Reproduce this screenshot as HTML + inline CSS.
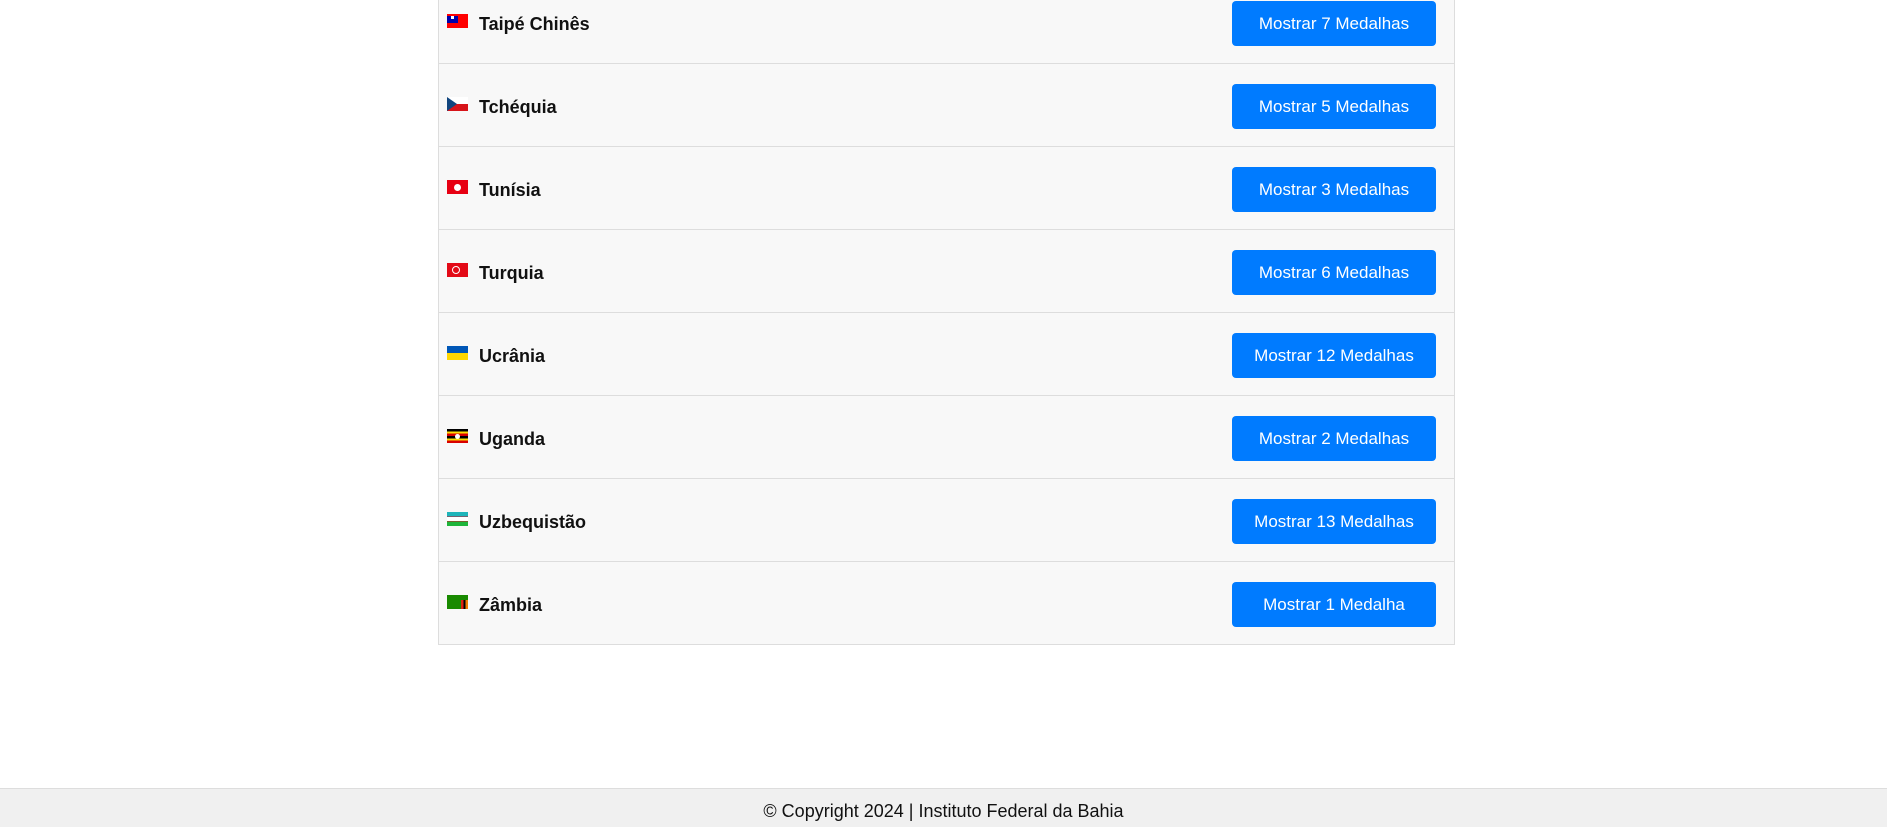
<!DOCTYPE html>
<html><head><meta charset="utf-8"><style>
body{margin:0;width:1887px;height:827px;background:#fff;font-family:"Liberation Sans",sans-serif;position:relative;overflow:hidden}
.list{position:absolute;left:438px;top:-19px;width:1017px;border:1px solid #ddd;border-top:none;box-sizing:border-box}
.row{height:83px;border-bottom:1px solid #ddd;box-sizing:border-box;background:#f8f8f8;position:relative}
.row:last-child{border-bottom:none;height:82px}
.flag{position:absolute;left:8px;top:33px;width:21px;height:14px;overflow:hidden}
.name{position:absolute;left:40px;top:33px;font-weight:bold;font-size:18px;color:#111}
.btn{position:absolute;right:18px;top:20px;width:204px;height:45px;background:#007bff;color:#fff;border-radius:4px;font-size:17px;line-height:45px;text-align:center}
.footer{position:absolute;left:0;top:788px;width:1887px;height:39px;background:#f0f0f0;border-top:1px solid #ddd;box-sizing:border-box;text-align:center;font-size:18px;line-height:44px;color:#111}
</style></head><body>
<div class="list">
<div class="row"><div class="flag" style="background:#f00"><div style="width:11px;height:7px;background:#00a"><div style="width:3px;height:3px;background:#fff;margin:2px 4px"></div></div></div><div class="name">Taipé Chinês</div><div class="btn">Mostrar 7 Medalhas</div></div>
<div class="row"><div class="flag" style="background:linear-gradient(#fff 50%,#d7141a 50%)"><svg width="21" height="14" style="position:absolute;left:0;top:0"><polygon points="0,0 10,7 0,14" fill="#11457e"/></svg></div><div class="name">Tchéquia</div><div class="btn">Mostrar 5 Medalhas</div></div>
<div class="row"><div class="flag" style="background:#e70013"><div style="width:7px;height:7px;border-radius:50%;background:#fff;margin:3.5px 7px"></div></div><div class="name">Tunísia</div><div class="btn">Mostrar 3 Medalhas</div></div>
<div class="row"><div class="flag" style="background:#e30a17"><div style="width:6px;height:6px;border-radius:50%;border:1px solid #fff;margin:3px 5px"></div></div><div class="name">Turquia</div><div class="btn">Mostrar 6 Medalhas</div></div>
<div class="row"><div class="flag" style="background:linear-gradient(#0057b7 50%,#ffd700 50%)"></div><div class="name">Ucrânia</div><div class="btn">Mostrar 12 Medalhas</div></div>
<div class="row"><div class="flag" style="background:linear-gradient(#000 0 17%,#fcdc04 17% 33%,#d90000 33% 50%,#000 50% 67%,#fcdc04 67% 83%,#d90000 83%)"><div style="width:5px;height:5px;border-radius:50%;background:#fff;margin:4.5px 8px"></div></div><div class="name">Uganda</div><div class="btn">Mostrar 2 Medalhas</div></div>
<div class="row"><div class="flag" style="background:linear-gradient(#1eb5ba 0 32%,#ce1126 32% 35%,#fff 35% 65%,#ce1126 65% 68%,#1eb53a 68%)"></div><div class="name">Uzbequistão</div><div class="btn">Mostrar 13 Medalhas</div></div>
<div class="row"><div class="flag" style="background:#198a00"><div style="position:absolute;right:0;bottom:0;width:7px;height:9px;background:linear-gradient(90deg,#de2010 33%,#000 33% 66%,#ef7d00 66%)"></div></div><div class="name">Zâmbia</div><div class="btn">Mostrar 1 Medalha</div></div>
</div>
<div class="footer">© Copyright 2024 | Instituto Federal da Bahia</div>
</body></html>
